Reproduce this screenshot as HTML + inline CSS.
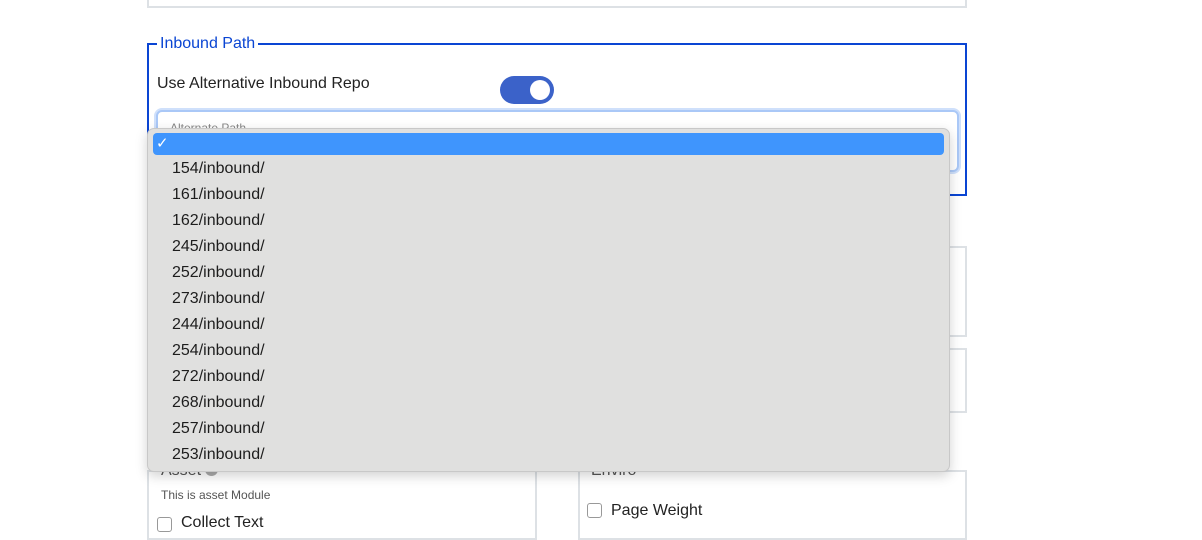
<!DOCTYPE html>
<html><head><style>
body{margin:0;width:1202px;height:528px;background:#fff;position:relative;overflow:hidden;font-family:"Liberation Sans",sans-serif;}
.abs{position:absolute;box-sizing:border-box;}
.box{border:2px solid #dde1e5;}
.item{position:absolute;left:24px;font-size:16px;color:#1d1d1d;}
</style></head><body>
<div class="abs box" style="left:147px;top:-10px;width:820px;height:18px;"></div>
<div class="abs" style="left:147px;top:43px;width:820px;height:153px;border:2px solid #0a45d3;"></div>
<div class="abs" style="left:157px;top:35px;background:#fff;padding:0 3px;color:#0a45d3;font-size:16px;">Inbound Path</div>
<div class="abs" style="left:157px;top:75px;font-size:16px;color:#222;">Use Alternative Inbound Repo</div>
<div class="abs" style="left:500px;top:76px;width:54px;height:28px;border-radius:14px;background:#3b62c9;"><div style="position:absolute;right:4px;top:4px;width:20px;height:20px;border-radius:50%;background:#fff"></div></div>
<div class="abs" style="left:156px;top:110px;width:803px;height:62px;border:2px solid #aac8f7;border-radius:6px;background:#fff;box-shadow:0 0 0 2px #cfe0fb;"></div>
<div class="abs" style="left:170px;top:121px;font-size:12px;color:#888;">Alternate Path</div>
<div class="abs box" style="left:147px;top:246px;width:820px;height:91px;"></div>
<div class="abs box" style="left:147px;top:348px;width:820px;height:65px;"></div>
<div class="abs box" style="left:147px;top:470px;width:390px;height:70px;"></div>
<div class="abs box" style="left:578px;top:470px;width:389px;height:70px;"></div>
<div class="abs" style="left:161px;top:462px;font-size:16px;color:#555;">Asset <span style="display:inline-block;width:13px;height:13px;border-radius:50%;background:#aaa;vertical-align:-1px"></span></div>
<div class="abs" style="left:591px;top:462px;font-size:16px;color:#555;">Enviro</div>
<div class="abs" style="left:161px;top:488px;font-size:12px;color:#555;">This is asset Module</div>
<div class="abs" style="left:157px;top:517px;width:15px;height:15px;border:1px solid #999;border-radius:3px;"></div>
<div class="abs" style="left:181px;top:514px;font-size:16px;color:#222;">Collect Text</div>
<div class="abs" style="left:587px;top:503px;width:15px;height:15px;border:1px solid #999;border-radius:3px;"></div>
<div class="abs" style="left:611px;top:502px;font-size:16px;color:#222;">Page Weight</div>
<div class="abs" style="left:147px;top:128px;width:803px;height:344px;background:#e0e0df;border-radius:7px;border:1px solid #c8c8c8;box-shadow:0 4px 12px rgba(0,0,0,0.18);">
<div style="position:absolute;left:5px;top:4px;width:791px;height:22px;background:#3f95fd;border-radius:4px;color:#fff;font-size:15px;line-height:22px;padding-left:3px;box-sizing:border-box;">✓</div>
<div class="item" style="top:31px">154/inbound/</div>
<div class="item" style="top:57px">161/inbound/</div>
<div class="item" style="top:83px">162/inbound/</div>
<div class="item" style="top:109px">245/inbound/</div>
<div class="item" style="top:135px">252/inbound/</div>
<div class="item" style="top:161px">273/inbound/</div>
<div class="item" style="top:187px">244/inbound/</div>
<div class="item" style="top:213px">254/inbound/</div>
<div class="item" style="top:239px">272/inbound/</div>
<div class="item" style="top:265px">268/inbound/</div>
<div class="item" style="top:291px">257/inbound/</div>
<div class="item" style="top:317px">253/inbound/</div>
</div>
</body></html>
